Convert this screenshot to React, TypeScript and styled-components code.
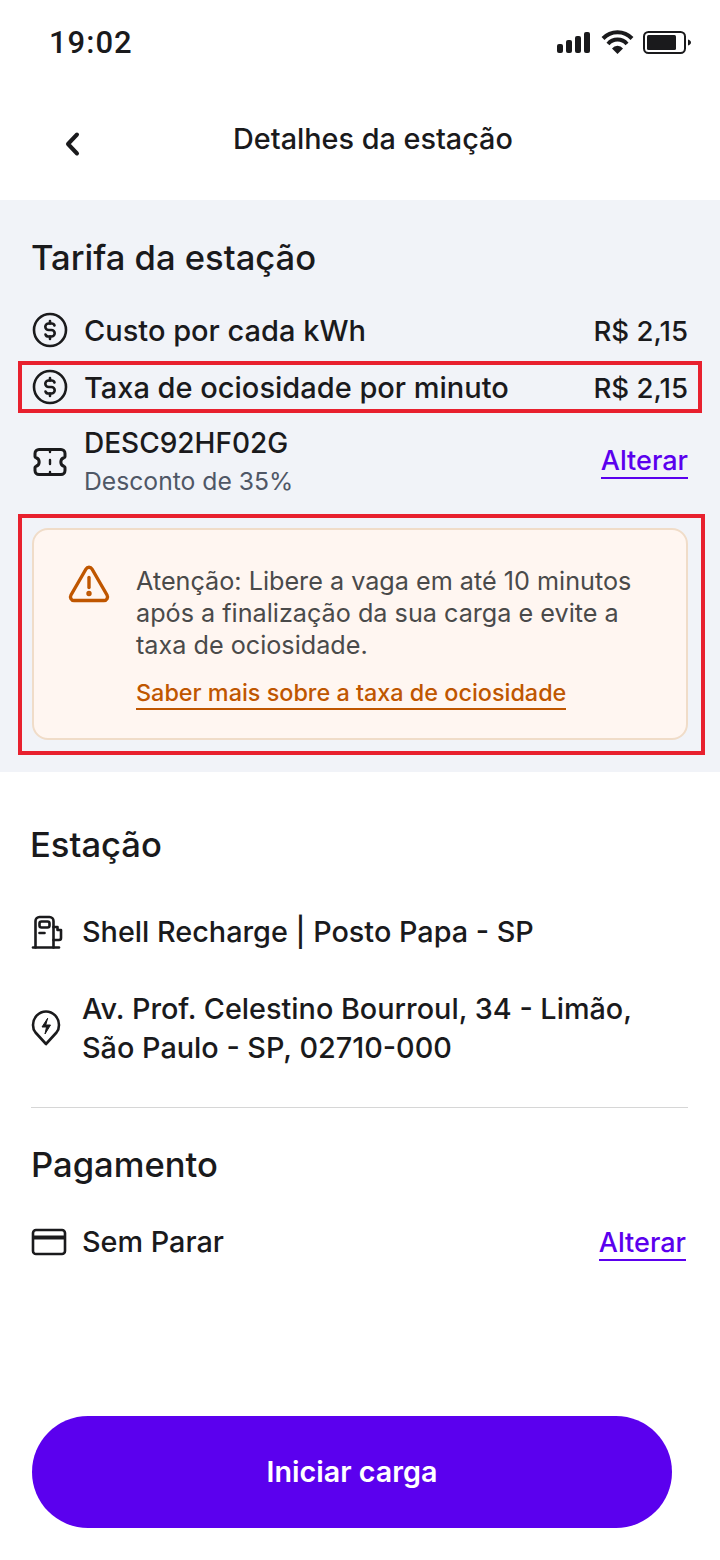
import styled, { createGlobalStyle } from "styled-components";

const INK = "#1a1a1c";
const PURPLE = "#5b00ee";
const ORANGE = "#bf5600";

const GlobalStyle = createGlobalStyle`
  html, body {
    margin: 0;
    padding: 0;
    background: #fff;
  }
  * {
    box-sizing: border-box;
  }
`;

const DollarIcon = () => (
  <svg width="36" height="36" viewBox="0 0 36 36" fill="none" stroke={INK} strokeWidth="2.600" strokeLinecap="round" strokeLinejoin="round">
    <circle cx="18" cy="18" r="16" />
    <path d="M22.500 13.500c-.4-1.200-1.500-2-2.800-2h-3c-1.900 0-3.400 1.400-3.400 3.200s1.500 3.300 3.400 3.300h2.600c1.900 0 3.400 1.500 3.400 3.300s-1.500 3.200-3.400 3.200h-3c-1.300 0-2.400-.8-2.800-2" />
    <path d="M18 9v2.400M18 24.600V27" />
  </svg>
);

const TicketIcon = () => (
  <svg width="36" height="30" viewBox="0 0 36 30" fill="none" stroke={INK} strokeWidth="3" strokeLinecap="round" strokeLinejoin="round">
    <path d="M7 2.500h22a4 4 0 0 1 4 4v3c0 .6-.4 1-1 1.200a4.500 4.500 0 0 0 0 8.600c.6.200 1 .6 1 1.200v3a4 4 0 0 1-4 4H7a4 4 0 0 1-4-4v-3c0-.6.4-1 1-1.200a4.500 4.500 0 0 0 0-8.600c-.6-.2-1-.6-1-1.200v-3a4 4 0 0 1 4-4z" />
    <path d="M18 2.500V5M18 13v4M18 25v2.500" strokeWidth="2.400" />
  </svg>
);

const WarningIcon = () => (
  <svg width="42" height="38" viewBox="0 0 42 38" fill="none" stroke={ORANGE} strokeWidth="3.400" strokeLinecap="round" strokeLinejoin="round">
    <path d="M18 4 3 30c-1.400 2.500.2 5.500 3 5.500h30c2.800 0 4.400-3 3-5.500L24 4c-1.400-2.400-4.600-2.400-6 0z" />
    <path d="M21 12.500v10" />
    <circle cx="21" cy="28.500" r="1" fill={ORANGE} />
  </svg>
);

const PumpIcon = () => (
  <svg width="34" height="34" viewBox="0 0 34 34" fill="none" stroke={INK} strokeWidth="2.600" strokeLinecap="round" strokeLinejoin="round">
    <path d="M2 32.500h26" />
    <path d="M4.500 32.500V6a4 4 0 0 1 4-4h10a4 4 0 0 1 4 4v26.500" />
    <rect x="8.500" y="6.500" width="10" height="6" rx="2" />
    <path d="M8.500 18h5" />
    <path d="M22.500 12h4v3h3.500v8a2 2 0 0 1-2 2h-5.500" />
  </svg>
);

const PinIcon = () => (
  <svg width="30" height="38" viewBox="0 0 30 38" fill="none" stroke={INK} strokeWidth="2.600" strokeLinecap="round" strokeLinejoin="round">
    <path d="M15 35 4.500 23.500C2.800 21.500 2 19 2 16 2 8.500 8 2.500 15 2.500S28 8.500 28 16c0 3-.8 5.500-2.500 7.500z" />
    <path d="M16.500 9.500 11 18h4.500l-1.500 7 5.500-9H15z" fill={INK} strokeWidth="1" />
  </svg>
);

const CardIcon = () => (
  <svg width="36" height="30" viewBox="0 0 36 30" fill="none" stroke={INK} strokeWidth="2.600" strokeLinejoin="round">
    <rect x="2" y="3" width="32" height="24" rx="3" />
    <path d="M2 10.500h32" strokeWidth="4" />
  </svg>
);

const ChevronIcon = () => (
  <svg width="16" height="26" viewBox="0 0 16 26" fill="none" stroke={INK} strokeWidth="4" strokeLinecap="round" strokeLinejoin="round">
    <path d="M13 3.500 4 13l9 9.500" />
  </svg>
);

const StatusIcons = () => (
  <svg width="136" height="24" viewBox="0 0 136 24" fill={INK}>
    <rect x="1" y="14" width="6" height="9" rx="2" />
    <rect x="10" y="10" width="6" height="13" rx="2" />
    <rect x="19" y="6" width="6" height="17" rx="2" />
    <rect x="28" y="2" width="6" height="21" rx="2" />
    <path d="M47 8.500a20 20 0 0 1 29 0" fill="none" stroke={INK} strokeWidth="4" />
    <path d="M52 14a12.500 12.500 0 0 1 19 0" fill="none" stroke={INK} strokeWidth="4" />
    <path d="M56 18.500a7 7 0 0 1 11 0L61.500 24z" />
    <rect x="88" y="2" width="41" height="21" rx="4.500" fill="none" stroke={INK} strokeWidth="2" />
    <rect x="91" y="5" width="29" height="15" rx="1.500" />
    <path d="M132 9.500c1.800.5 3 1.600 3 3s-1.200 2.500-3 3z" />
  </svg>
);

const App = () => {
  return (
    <Page>
      <GlobalStyle />
      <StatusBar>
        <Clock>19:02</Clock>
        <StatusIcons />
      </StatusBar>
      <Header>
        <BackButton>
          <ChevronIcon />
        </BackButton>
        <HeaderTitle>Detalhes da estação</HeaderTitle>
      </Header>
      <TariffSection>
        <SectionTitle>Tarifa da estação</SectionTitle>
        <TariffRow>
          <IconSlot>
            <DollarIcon />
          </IconSlot>
          <RowLabel>Custo por cada kWh</RowLabel>
          <Price>R$ 2,15</Price>
        </TariffRow>
        <HighlightRow>
          <IconSlot>
            <DollarIcon />
          </IconSlot>
          <RowLabel>Taxa de ociosidade por minuto</RowLabel>
          <Price>R$ 2,15</Price>
        </HighlightRow>
        <CouponRow>
          <IconSlot>
            <TicketIcon />
          </IconSlot>
          <CouponText>
            <CouponCode>DESC92HF02G</CouponCode>
            <CouponNote>Desconto de 35%</CouponNote>
          </CouponText>
          <ChangeLink>Alterar</ChangeLink>
        </CouponRow>
        <HighlightBox>
          <Alert>
            <AlertIcon>
              <WarningIcon />
            </AlertIcon>
            <AlertBody>
              <AlertText>
                Atenção: Libere a vaga em até 10 minutos
                <br />
                após a finalização da sua carga e evite a
                <br />
                taxa de ociosidade.
              </AlertText>
              <AlertLink>Saber mais sobre a taxa de ociosidade</AlertLink>
            </AlertBody>
          </Alert>
        </HighlightBox>
      </TariffSection>
      <StationSection>
        <SectionTitle>Estação</SectionTitle>
        <InfoRow>
          <InfoIcon>
            <PumpIcon />
          </InfoIcon>
          <InfoLabel>Shell Recharge | Posto Papa - SP</InfoLabel>
        </InfoRow>
        <AddressRow>
          <InfoIcon>
            <PinIcon />
          </InfoIcon>
          <InfoLabel>
            Av. Prof. Celestino Bourroul, 34 - Limão,
            <br />
            São Paulo - SP, 02710-000
          </InfoLabel>
        </AddressRow>
        <Divider />
        <PaymentTitle>Pagamento</PaymentTitle>
        <PaymentRow>
          <InfoIcon>
            <CardIcon />
          </InfoIcon>
          <InfoLabel>Sem Parar</InfoLabel>
          <PaymentLink>Alterar</PaymentLink>
        </PaymentRow>
      </StationSection>
      <Footer>
        <PrimaryButton>Iniciar carga</PrimaryButton>
      </Footer>
    </Page>
  );
};

const Page = styled.div`
  width: 720px;
  height: 1560px;
  display: flex;
  flex-direction: column;
  background: #fff;
  color: ${INK};
  font-family: "Inter", "Noto Sans", sans-serif;
  overflow: hidden;
`;
const StatusBar = styled.div`
  height: 88px;
  padding: 0 28px 4px 49px;
  display: flex;
  align-items: center;
  justify-content: space-between;
`;
const Clock = styled.span`
  font-family: "Roboto", sans-serif;
  font-size: 31px;
  font-weight: 500;
  letter-spacing: 1px;
`;
const Header = styled.div`
  height: 112px;
  padding: 0 0 12px 64px;
  display: flex;
  align-items: center;
`;
const BackButton = styled.div`
  width: 169px;
  padding-top: 16px;
`;
const HeaderTitle = styled.h1`
  margin: 0;
  font-size: 28.8px;
  font-weight: 500;
`;
const TariffSection = styled.section`
  height: 572px;
  padding: 32px 32px 0;
  background: #f1f3f8;
`;
const SectionTitle = styled.h2`
  margin: 0 0 0 -1px;
  font-size: 34.6px;
  line-height: 50px;
  font-weight: 500;
`;
const TariffRow = styled.div`
  height: 52px;
  margin-top: 22px;
  display: flex;
  align-items: center;
`;
const HighlightRow = styled(TariffRow)`
  margin: 5px -14px 0;
  padding: 0 10px;
  border: 4px solid #e8202e;
`;
const CouponRow = styled.div`
  height: 78px;
  margin-top: 10px;
  display: flex;
  align-items: center;
`;
const IconSlot = styled.div`
  width: 52px;
  flex: none;
  display: flex;
`;
const RowLabel = styled.span`
  flex: 1;
  padding-top: 2px;
  font-size: 29px;
  line-height: 38px;
  font-weight: 500;
`;
const Price = styled.span`
  padding-top: 2px;
  font-size: 27.6px;
  font-weight: 500;
`;
const CouponText = styled.div`
  flex: 1;
  display: flex;
  flex-direction: column;
`;
const CouponCode = styled.span`
  font-size: 28px;
  line-height: 38px;
  font-weight: 500;
`;
const CouponNote = styled.span`
  font-size: 24.7px;
  line-height: 38px;
  color: #4f5766;
`;
const ChangeLink = styled.span`
  font-size: 27px;
  line-height: 32px;
  font-weight: 500;
  color: ${PURPLE};
  border-bottom: 2px solid ${PURPLE};
`;
const PaymentLink = styled(ChangeLink)`
  margin: 4px 2px 0 0;
`;
const HighlightBox = styled.div`
  margin: 13px -17px 0 -14px;
  padding: 10px 13px 11px 10px;
  border: 4px solid #e8202e;
`;
const Alert = styled.div`
  height: 212px;
  padding: 35px 20px 0 34px;
  display: flex;
  background: #fff6f1;
  border: 2px solid #f0dcc8;
  border-radius: 16px;
`;
const AlertIcon = styled.div`
  width: 68px;
  flex: none;
`;
const AlertBody = styled.div`
  display: flex;
  flex-direction: column;
  align-items: flex-start;
`;
const AlertText = styled.p`
  margin: 0;
  font-size: 25.2px;
  line-height: 32px;
  color: #4a4a4a;
`;
const AlertLink = styled.span`
  margin-top: 17px;
  font-size: 23.4px;
  line-height: 30px;
  font-weight: 500;
  color: ${ORANGE};
  border-bottom: 2px solid ${ORANGE};
`;
const StationSection = styled.section`
  padding: 47px 32px 0 31px;
  display: flex;
  flex-direction: column;
`;
const InfoRow = styled.div`
  margin-top: 43px;
  display: flex;
  align-items: center;
`;
const AddressRow = styled(InfoRow)`
  margin-top: 38px;
`;
const PaymentRow = styled(InfoRow)`
  margin-top: 33px;
  justify-content: space-between;
`;
const InfoIcon = styled.div`
  width: 51px;
  flex: none;
  display: flex;
`;
const InfoLabel = styled.span`
  flex: 1;
  font-size: 28.8px;
  line-height: 39px;
  font-weight: 500;
`;
const Divider = styled.div`
  height: 1px;
  margin-top: 40px;
  background: #d6d6d6;
`;
const PaymentTitle = styled(SectionTitle)`
  margin: 31px 0 0 0;
`;
const Footer = styled.div`
  margin-top: auto;
  padding: 0 48px 32px 32px;
`;
const PrimaryButton = styled.button`
  width: 100%;
  height: 112px;
  padding-bottom: 2px;
  border: none;
  border-radius: 56px;
  background: ${PURPLE};
  color: #fff;
  font-family: inherit;
  font-size: 28.7px;
  font-weight: 600;
`;

export default App;
